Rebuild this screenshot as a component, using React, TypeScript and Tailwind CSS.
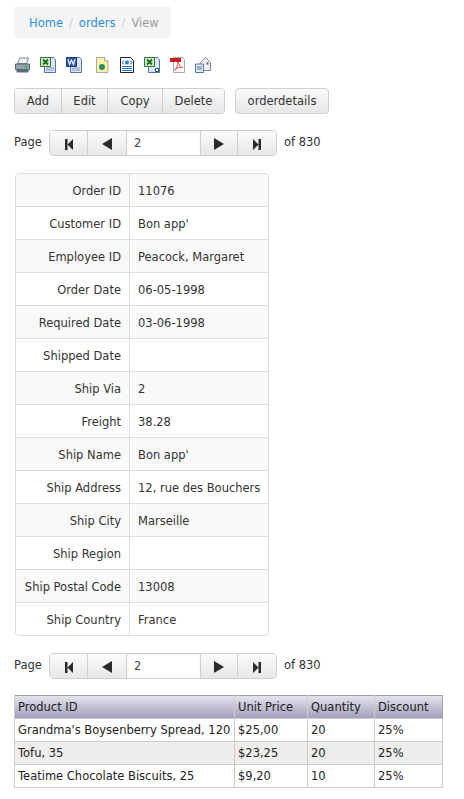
import React from 'react';

const recordRows: [string, string][] = [
  ['Order ID', '11076'],
  ['Customer ID', "Bon app'"],
  ['Employee ID', 'Peacock, Margaret'],
  ['Order Date', '06-05-1998'],
  ['Required Date', '03-06-1998'],
  ['Shipped Date', ''],
  ['Ship Via', '2'],
  ['Freight', '38.28'],
  ['Ship Name', "Bon app'"],
  ['Ship Address', '12, rue des Bouchers'],
  ['Ship City', 'Marseille'],
  ['Ship Region', ''],
  ['Ship Postal Code', '13008'],
  ['Ship Country', 'France'],
];

const detailRows = [
  ["Grandma's Boysenberry Spread, 120", '$25,00', '20', '25%'],
  ['Tofu, 35', '$23,25', '20', '25%'],
  ['Teatime Chocolate Biscuits, 25', '$9,20', '10', '25%'],
];

const btn = 'h-[26px] flex items-center justify-center bg-gradient-to-b from-[#fbfbfb] to-[#e6e6e6] text-[#333]';

function Doc({ children }: { children: React.ReactNode }) {
  return (
    <svg width="16" height="16" viewBox="0 0 16 16" className="block">
      {children}
    </svg>
  );
}

function ExportIcons() {
  return (
    <div className="flex items-center mt-[19px] ml-[1px] h-[16px]">
      {/* printer */}
      <div className="w-[25px]">
        <Doc>
          <path d="M5 1h8.500l-2 5.500H2.500z" fill="#f2f4f8" stroke="#7d8794" />
          <path d="M.500 7h14v5.500H.500z" fill="#95a3b3" stroke="#56616e" />
          <path d="M1.500 12.500h12v3h-12z" fill="#5c6b7c" />
          <path d="M9.500 9h3v2h-3z" fill="#25c04a" />
        </Doc>
      </div>
      {/* excel */}
      <div className="w-[26px]">
        <Doc>
          <path d="M4.500.500h9l2 2v13h-11z" fill="#dce6f4" stroke="#55749f" />
          <path d="M6 11h8M6 13h8" stroke="#7f9cc4" />
          <path d="M.500.500h10v9H.500z" fill="#d6e8cf" stroke="#2f7a2f" />
          <path d="M3 2.500l5 5M8 2.500l-5 5" stroke="#1e6b1e" strokeWidth="1.800" />
        </Doc>
      </div>
      {/* word */}
      <div className="w-[28px]">
        <Doc>
          <path d="M4.500.500h9l2 2v13h-11z" fill="#dce6f4" stroke="#55749f" />
          <path d="M6 11h8M6 13h8" stroke="#7f9cc4" />
          <path d="M.500.500h10v9H.500z" fill="#2a55a8" stroke="#1c3c80" />
          <path d="M2 2l1.500 5.500L5.500 3l2 4.500L9 2" fill="none" stroke="#fff" strokeWidth="1.100" />
        </Doc>
      </div>
      {/* rich document */}
      <div className="w-[25px] pl-[1px]">
        <Doc>
          <path d="M1.500.500h8l3.500 3.500v11.500H1.500z" fill="#fdf3a8" stroke="#a9a9a0" />
          <path d="M9.500.500V4H13" fill="#fff" stroke="#a9a9a0" />
          <circle cx="7" cy="10" r="3" fill="#2f8f4f" />
          <path d="M6 8.500a2 2 0 012 1l-2 2z" fill="#2b6fc8" />
        </Doc>
      </div>
      {/* html */}
      <div className="w-[25px]">
        <Doc>
          <path d="M1.500.500h10l3 3v12h-13z" fill="#fff" stroke="#222" />
          <ellipse cx="8" cy="5.500" rx="2" ry="2" fill="#1d80d0" />
          <path d="M5 3.500l-2 2 2 2M11 3.500l2 2-2 2" fill="none" stroke="#1d5fb0" />
          <path d="M3 9.500h10M3 11.500h10M3 13.500h10" stroke="#2a68b8" />
        </Doc>
      </div>
      {/* csv */}
      <div className="w-[26px]">
        <Doc>
          <path d="M4.500.500h9l2 2v13h-11z" fill="#dce6f4" stroke="#55749f" />
          <path d="M11.500 11.500h3v3h-3z" fill="#fff" stroke="#2d4a78" />
          <path d="M.500.500h10v9H.500z" fill="#d6e8cf" stroke="#2f7a2f" />
          <path d="M3 2.500l5 5M8 2.500l-5 5" stroke="#1e6b1e" strokeWidth="1.800" />
        </Doc>
      </div>
      {/* pdf */}
      <div className="w-[25px]">
        <Doc>
          <path d="M3.500.500h9l2 2v13h-11z" fill="#fff" stroke="#aaa" />
          <path d="M0 1h11v4H0z" fill="#cc1f1f" />
          <path d="M8 5c0 4-2 7-3.500 8 2-2 5-3 8-2.500-2-.5-4-3-4.500-5.500z" fill="none" stroke="#e2564d" />
        </Doc>
      </div>
      {/* email */}
      <div>
        <Doc>
          <path d="M5.500 5.500l5-5 5 5v8h-10z" fill="#eef1f5" stroke="#7d8794" />
          <path d="M11.500 5.500h2v2h-2z" fill="#c0392b" />
          <path d="M.500 7h8v8.500h-8z" fill="#dfe8f3" stroke="#55749f" />
          <path d="M2 10h5M2 12h5" stroke="#55749f" />
        </Doc>
      </div>
    </div>
  );
}

function Triangle({ dir, bar }: { dir: 'l' | 'r'; bar?: boolean }) {
  if (bar) {
    return (
      <svg width="8" height="11" viewBox="0 0 8 11" fill="#2b2b2b">
        {dir === 'l' ? <path d="M0 0h2.500v11H0zM8 0v11L2.500 5.500z" /> : <path d="M5.500 0H8v11H5.500zM0 0v11l5.500-5.500z" />}
      </svg>
    );
  }
  return (
    <svg width="10" height="12" viewBox="0 0 10 12" fill="#2b2b2b">
      {dir === 'l' ? <path d="M10 0v12L0 6z" /> : <path d="M0 0v12l10-6z" />}
    </svg>
  );
}

function Pager({ className }: { className: string }) {
  return (
    <div className={`flex items-center ${className}`}>
      <span className="w-[35px] text-[#333]">Page</span>
      <div className="flex h-[26px] w-[228px] rounded-[4px] border border-[#cfcfcf] overflow-hidden box-border">
        <div className={`${btn} w-[38px] border-r border-[#cfcfcf]`}><Triangle dir="l" bar /></div>
        <div className={`${btn} w-[39px] border-r border-[#cfcfcf]`}><Triangle dir="l" /></div>
        <div className="w-[73px] bg-white flex items-center pl-[7px] pt-[2px] text-[#444] shadow-[inset_0_1px_2px_rgba(0,0,0,0.08)]">2</div>
        <div className={`${btn} w-[38px] border-x border-[#cfcfcf]`}><Triangle dir="r" /></div>
        <div className={`${btn} flex-1`}><Triangle dir="r" bar /></div>
      </div>
      <span className="ml-[7px] text-[#333]">of 830</span>
    </div>
  );
}

export default function App() {
  return (
    <div className="h-[799px] w-[464px] overflow-hidden bg-white pl-[14px] pt-[6px] text-[11.5px] text-[#333] font-['DejaVu_Sans',sans-serif]">
      {/* Breadcrumb */}
      <div className="flex items-center h-[32px] w-[157px] rounded-[4px] bg-[#f5f5f5] pl-[15px] pt-[3px]">
        <span className="text-[#2a8fdc]">Home</span>
        <span className="mx-[6px] text-[#ccc]">/</span>
        <span className="text-[#2a8fdc]">orders</span>
        <span className="mx-[6px] text-[#ccc]">/</span>
        <span className="text-[#999]">View</span>
      </div>

      <ExportIcons />

      {/* Actions */}
      <div className="flex mt-[15px]">
        <div className="flex rounded-[4px] border border-[#cfcfcf] overflow-hidden h-[26px] w-[211px]">
          <div className={`${btn} h-full w-[47px] pt-[2px] border-r border-[#cfcfcf]`}>Add</div>
          <div className={`${btn} h-full w-[46px] pt-[2px] border-r border-[#cfcfcf]`}>Edit</div>
          <div className={`${btn} h-full w-[55px] pt-[2px] border-r border-[#cfcfcf]`}>Copy</div>
          <div className={`${btn} h-full flex-1 pt-[2px]`}>Delete</div>
        </div>
        <div className={`${btn} ml-[10px] w-[94px] pt-[2px] rounded-[4px] border border-[#cfcfcf]`}>orderdetails</div>
      </div>

      <Pager className="mt-[16px]" />

      {/* Record */}
      <div className="mt-[17px] ml-[1px] w-[254px] rounded-[4px] border border-[#ddd] overflow-hidden">
        {recordRows.map(([label, value], i) => (
          <div key={label} className={`flex ${i > 0 ? 'h-[33px] border-t border-[#ddd]' : 'h-[32px]'} ${i % 2 === 0 ? 'bg-[#f9f9f9]' : 'bg-white'}`}>
            <div className="w-[114px] border-r border-[#ddd] flex items-center justify-end pr-[8px] pt-[4px]">{label}</div>
            <div className="flex-1 flex items-center pl-[8px] pt-[4px]">{value}</div>
          </div>
        ))}
      </div>

      <Pager className="mt-[17px]" />

      {/* Order details grid */}
      <table className="mt-[16px] w-[429px] table-fixed border-collapse border border-[#a0a0a0] text-[#222]">
        <colgroup>
          <col className="w-[220px]" />
          <col className="w-[73px]" />
          <col className="w-[67px]" />
          <col />
        </colgroup>
        <thead>
          <tr className="h-[23px] bg-gradient-to-b from-[#e4e4ee] to-[#9f9db8]">
            {['Product ID', 'Unit Price', 'Quantity', 'Discount'].map((h) => (
              <th key={h} className="border-l border-[#cccccc] px-[3px] pt-[2px] text-left font-normal">{h}</th>
            ))}
          </tr>
        </thead>
        <tbody>
          {detailRows.map((row, i) => (
            <tr key={row[0]} className={`h-[23px] ${i % 2 === 1 ? 'bg-[#eeeeec]' : 'bg-white'}`}>
              {row.map((c, j) => (
                <td key={j} className="border border-[#cccccc] px-[3px] pt-[2px] whitespace-nowrap">{c}</td>
              ))}
            </tr>
          ))}
        </tbody>
      </table>
    </div>
  );
}
